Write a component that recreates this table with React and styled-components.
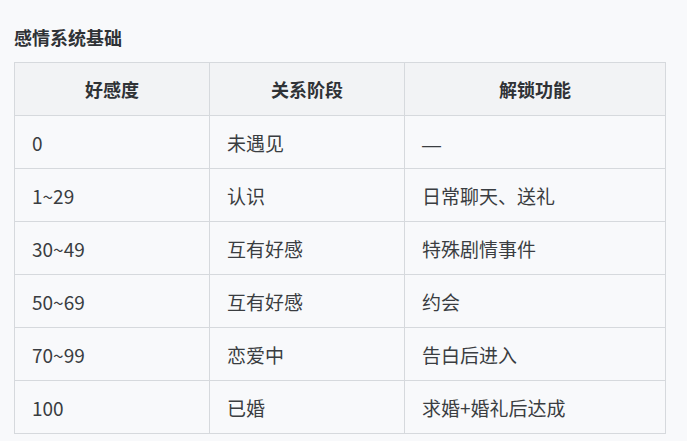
import React from "react";
import styled, { createGlobalStyle } from "styled-components";

const GlobalStyle = createGlobalStyle`
  body {
    margin: 0;
    background: #f8f9fb;
    font-family: "Noto Sans CJK SC", "Noto Sans", sans-serif;
    color: #333639;
  }
`;

const Page = styled.div`
  padding: 24px 14px 0 14px;
`;

const Title = styled.h3`
  font-size: 18px;
  font-weight: bold;
  line-height: 26px;
  margin: 0 0 12px 0;
  color: #2f3236;
`;

const Table = styled.table`
  border-collapse: collapse;
  width: 651px;
  table-layout: fixed;
  font-size: 18px;
`;

const Th = styled.th`
  background: #f2f3f5;
  border: 1px solid #d6d9dd;
  height: 52px;
  padding: 0 16px;
  text-align: center;
  font-weight: bold;
  color: #2f3236;
`;

const Td = styled.td`
  border: 1px solid #d6d9dd;
  height: 52px;
  padding: 0 16px 0 17px;
  text-align: left;
  font-size: 19px;
  font-weight: normal;
  color: #3a3d41;
`;

const Dash = styled.span`
  font-family: "Liberation Sans", sans-serif;
  font-weight: normal;
`;

const rows = [
  ["0", "未遇见", "—"],
  ["1~29", "认识", "日常聊天、送礼"],
  ["30~49", "互有好感", "特殊剧情事件"],
  ["50~69", "互有好感", "约会"],
  ["70~99", "恋爱中", "告白后进入"],
  ["100", "已婚", "求婚+婚礼后达成"],
];

const App = () => (
  <Page>
    <GlobalStyle />
    <Title>感情系统基础</Title>
    <Table>
      <colgroup>
        <col style={{ width: 195 }} />
        <col style={{ width: 195 }} />
        <col style={{ width: 261 }} />
      </colgroup>
      <thead>
        <tr>
          <Th>好感度</Th>
          <Th>关系阶段</Th>
          <Th>解锁功能</Th>
        </tr>
      </thead>
      <tbody>
        {rows.map((r, i) => (
          <tr key={i}>
            {r.map((c, j) => (
              <Td key={j}>{c === "—" ? <Dash>{c}</Dash> : c}</Td>
            ))}
          </tr>
        ))}
      </tbody>
    </Table>
  </Page>
);

export default App;
